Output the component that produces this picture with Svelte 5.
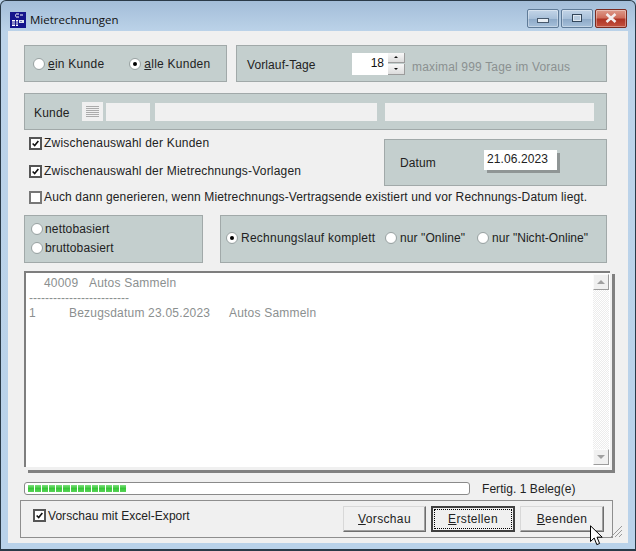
<script>
  const progressBlocks = Array.from({ length: 14 });
</script>

<div class="window">
  <header class="titlebar">
    <svg class="appicon" viewBox="0 0 16 16" aria-hidden="true">
      <rect width="16" height="16" fill="#14148c" />
      <path d="M6 2h3M5 3h1M5 4h1M6 5h3M10 3h3" stroke="#fff" stroke-width="1" fill="none" />
      <rect x="2" y="8" width="3" height="6" fill="#fff" />
      <rect x="6" y="8" width="2" height="6" fill="#fff" />
      <rect x="9" y="8" width="5" height="3" fill="#dfe4ee" />
      <path d="M2 10h3M2 12h3M6 10h2M6 12h2M11 9v1" stroke="#14148c" stroke-width="1" />
    </svg>
    <span class="title">Mietrechnungen</span>
    <div class="winbtns">
      <div class="winbtn min"><span></span></div>
      <div class="winbtn max"><span></span></div>
      <div class="winbtn close">
        <svg viewBox="0 0 14 10" width="14" height="10" aria-hidden="true"><path d="M2.5 1 L11.5 9 M11.5 1 L2.5 9" stroke="#f4eeee" stroke-width="2.6" /></svg>
      </div>
    </div>
  </header>

  <main class="client">
    <div class="row first">
      <section class="panel scope">
        <label class="opt"><i class="radio"></i><span><u>e</u>in Kunde</span></label>
        <label class="opt"><i class="radio on"></i><span><u>a</u>lle Kunden</span></label>
      </section>
      <section class="panel lead">
        <span class="lead-label">Vorlauf-Tage</span>
        <div class="spin">
          <div class="spin-value">18</div>
          <div class="spin-btns">
            <div class="spin-btn"><b class="up"></b></div>
            <div class="spin-btn"><b class="down"></b></div>
          </div>
        </div>
        <span class="muted">maximal 999 Tage im Voraus</span>
      </section>
    </div>

    <section class="panel customer">
      <span class="customer-label">Kunde</span>
      <div class="listbtn">
        <svg viewBox="0 0 13 11" width="13" height="11" aria-hidden="true"><path d="M0 .5h13M0 2.5h13M0 4.5h13M0 6.5h13M0 8.5h13M0 10.5h13" stroke="#ababab" stroke-width="1" /></svg>
      </div>
      <div class="field f1"></div>
      <div class="field f2"></div>
      <div class="field f3"></div>
    </section>

    <div class="middle">
      <div class="checks">
        <label class="check"><i class="box"><svg viewBox="0 0 11 11" aria-hidden="true"><path d="M2 5.5 L4.5 8 L9 2.5" fill="none" stroke="#111" stroke-width="2" /></svg></i><span>Zwischenauswahl der Kunden</span></label>
        <label class="check"><i class="box"><svg viewBox="0 0 11 11" aria-hidden="true"><path d="M2 5.5 L4.5 8 L9 2.5" fill="none" stroke="#111" stroke-width="2" /></svg></i><span>Zwischenauswahl der Mietrechnungs-Vorlagen</span></label>
      </div>
      <section class="panel date">
        <span>Datum</span>
        <div class="date-value">21.06.2023</div>
      </section>
    </div>

    <label class="check long"><i class="box off"></i><span>Auch dann generieren, wenn Mietrechnungs-Vertragsende existiert und vor Rechnungs-Datum liegt.</span></label>

    <div class="row options">
      <section class="panel basis">
        <label class="opt"><i class="radio"></i><span>nettobasiert</span></label>
        <label class="opt"><i class="radio"></i><span>bruttobasiert</span></label>
      </section>
      <section class="panel run">
        <label class="opt o1"><i class="radio on"></i><span>Rechnungslauf komplett</span></label>
        <label class="opt o2"><i class="radio"></i><span>nur "Online"</span></label>
        <label class="opt o3"><i class="radio"></i><span>nur "Nicht-Online"</span></label>
      </section>
    </div>

    <section class="log">
      <div class="log-inner">
        <div class="log-text">
          <div class="l1">40009&nbsp;&nbsp;&nbsp;Autos Sammeln</div>
          <div class="l2">-------------------------</div>
          <div class="l3"><span class="c1">1</span><span class="c2">Bezugsdatum 23.05.2023</span><span>Autos Sammeln</span></div>
        </div>
        <div class="scrollbar">
          <div class="sb-btn"><b class="sb-up"></b></div>
          <div class="sb-track"></div>
          <div class="sb-btn"><b class="sb-down"></b></div>
        </div>
      </div>
    </section>

    <div class="status">
      <div class="progress">
        {#each progressBlocks as _}<i></i>{/each}
      </div>
      <span>Fertig. 1 Beleg(e)</span>
    </div>

    <footer class="actions">
      <label class="check export"><i class="box"><svg viewBox="0 0 11 11" aria-hidden="true"><path d="M2 5.5 L4.5 8 L9 2.5" fill="none" stroke="#111" stroke-width="2" /></svg></i><span>Vorschau mit Excel-Export</span></label>
      <div class="buttons">
        <button type="button"><u>V</u>orschau</button>
        <button type="button" class="default"><span><u>E</u>rstellen</span></button>
        <button type="button"><u>B</u>eenden</button>
      </div>
    </footer>
  </main>

  <svg class="grip" viewBox="0 0 13 13" aria-hidden="true"><path d="M1 12 L12 1 M5 12 L12 5 M9 12 L12 9" stroke="#9a9a9a" stroke-width="1" fill="none" /></svg>
  <svg class="cursor" viewBox="0 0 14 21" aria-hidden="true"><path d="M.5.8 V16.5 L4.2 13 L6.8 19.6 L9.6 18.5 L7 12.2 H12.2 Z" fill="#fff" stroke="#000" stroke-width="1" /></svg>
</div>

<style>
  :global(body) { margin: 0; background: #b9d1e8; }
  .window {
    position: relative;
    width: 636px;
    height: 551px;
    box-sizing: border-box;
    overflow: hidden;
    padding: 0 7px 6px;
    display: flex;
    flex-direction: column;
    background: linear-gradient(180deg, #a3bdd8 0, #bcd3e9 31px, #b9d2ea 100%);
    border: 1px solid #2a3a48;
    border-width: 1px 1px 2px 1px;
    border-radius: 6px 6px 0 0;
    font-family: "Liberation Sans", Arial, sans-serif;
    font-size: 12px;
    color: #222;
  }
  .titlebar {
    flex: 0 0 30px;
    display: flex;
    align-items: center;
    padding-top: 7px;
    box-sizing: border-box;
  }
  .appicon { width: 16px; height: 16px; margin: 0 4px 0 2px; }
  .title { font-family: "Open Sans", sans-serif; font-size: 11.5px; color: #111; }
  .winbtns { margin-left: auto; display: flex; gap: 2px; margin-right: 1px; margin-top: -3px; }
  .winbtn {
    width: 30px;
    height: 17px;
    border: 1px solid #5f7b98;
    border-radius: 2px;
    display: flex;
    align-items: center;
    justify-content: center;
    background: linear-gradient(180deg, #c3d5e8 0, #a8c0d9 50%, #8eaac8 55%, #a6c0da 100%);
    box-shadow: inset 0 0 0 1px rgba(255,255,255,.35);
  }
  .winbtn.min span { width: 10px; height: 3px; margin-top: 4px; background: #e8eef4; border: 1px solid #46586c; }
  .winbtn.max span { width: 8px; height: 6px; border: 1px solid #33475c; box-shadow: inset 0 0 0 1px #dfe8f1; background: #b8cce0; }
  .winbtn.close {
    border-color: #7b2a1f;
    background: linear-gradient(180deg, #dd9a8a 0, #cf6e5c 45%, #ae3424 55%, #c4523f 100%);
  }
  .client {
    flex: 1;
    background: #f0f0f0;
    padding: 14px 21px 0 16px;
    display: flex;
    flex-direction: column;
  }
  .row { display: flex; }
  .panel {
    box-sizing: border-box;
    background: #c4cfce;
    border: 1px solid #a1a9a9;
    display: flex;
  }
  .first { gap: 9px; height: 37px; }
  .scope { width: 203px; align-items: center; padding-left: 8px; gap: 25px; padding-top: 1px; }
  .opt { display: inline-flex; align-items: center; gap: 3px; letter-spacing: .25px; }
  .radio {
    box-sizing: border-box;
    width: 12px;
    height: 12px;
    border-radius: 50%;
    border: 1px solid #9aa3a3;
    background: radial-gradient(circle at 45% 45%, #fff 55%, #e4e8e8 100%);
    display: inline-block;
    position: relative;
    flex: none;
  }
  .radio.on::after {
    content: "";
    position: absolute;
    left: 3px;
    top: 3px;
    width: 4px;
    height: 4px;
    border-radius: 50%;
    background: #000;
  }
  .lead { flex: 1; align-items: center; padding-left: 10px; }
  .lead-label { width: 105px; letter-spacing: .1px; margin-top: 2px; }
  .spin { display: flex; height: 22px; }
  .spin-value {
    width: 32px;
    background: #fff;
    text-align: right;
    padding-right: 4px;
    font-size: 12px;
    line-height: 21px;
    color: #111;
  }
  .spin-btns { display: flex; flex-direction: column; gap: 1px; width: 17px; }
  .spin-btn {
    flex: 1;
    background: linear-gradient(180deg, #f8f8f8, #dcdcdc);
    border: 1px solid #9c9c9c;
    border-width: 0 1px 1px 0;
    display: flex;
    align-items: center;
    justify-content: center;
  }
  .spin-btn b { width: 0; height: 0; border-left: 2px solid transparent; border-right: 2px solid transparent; }
  .spin-btn .up { border-bottom: 2px solid #111; }
  .spin-btn .down { border-top: 2px solid #111; }
  .muted { color: #8b9191; margin-left: 7px; margin-top: 6px; letter-spacing: .17px; }
  .customer {
    height: 37px;
    margin-top: 11px;
    align-items: center;
    padding-left: 9px;
  }
  .customer-label { width: 48px; font-size: 12px; letter-spacing: .2px; margin-top: 2px; }
  .listbtn {
    width: 21px;
    height: 19px;
    background: #f0f0f0;
    display: flex;
    align-items: center;
    justify-content: center;
  }
  .field { height: 18px; background: #f0f0f0; }
  .f1 { width: 44px; margin-left: 3px; }
  .f2 { width: 222px; margin-left: 5px; }
  .f3 { width: 209px; margin-left: 8px; }
  .middle { display: flex; justify-content: space-between; margin-top: 9px; height: 47px; }
  .checks { display: flex; flex-direction: column; gap: 14px; padding-left: 5px; margin-top: -3px; }
  .check { display: flex; align-items: center; gap: 2px; letter-spacing: .2px; height: 14px; }
  .box {
    box-sizing: border-box;
    width: 13px;
    height: 13px;
    border: 2px solid #555;
    background: #fff;
    display: block;
    flex: none;
  }
  .box.off { border: 2px solid #777; }
  .box svg { display: block; width: 9px; height: 9px; }
  .date {
    width: 223px;
    align-items: center;
    padding-left: 15px;
    letter-spacing: .1px;
  }
  .date > span { width: 84px; }
  .date-value {
    width: 73px;
    height: 20px;
    box-sizing: border-box;
    background: #fff;
    padding-left: 3px;
    line-height: 18px;
    box-shadow: 3px 3px 0 #8f9595;
    margin-top: -5px;
    letter-spacing: .1px;
  }
  .long { margin: 4px 0 0 5px; letter-spacing: .13px; }
  .options { margin-top: 11px; height: 48px; gap: 17px; }
  .basis { width: 179px; flex-direction: column; padding: 0 0 1px 6px; justify-content: center; gap: 5px; align-items: flex-start; }
  .basis .opt { height: 14px; gap: 2px; letter-spacing: .15px; }
  .run { flex: 1; align-items: center; padding-left: 5px; padding-bottom: 3px; }
  .run .opt { gap: 3px; }
  .o1 { width: 159px; letter-spacing: .26px; }
  .o2 { width: 92px; letter-spacing: .1px; }
  .o3 { letter-spacing: .05px; }
  .log {
    box-sizing: border-box;
    height: 202px;
    width: 591px;
    margin-top: 8px;
    padding: 0 5px 6px 0;
    display: flex;
    position: relative;
  }
  .log::after {
    content: "";
    position: absolute;
    left: 4px;
    right: 0;
    bottom: 0;
    height: 3px;
    background: #808080;
  }
  .log::before {
    content: "";
    position: absolute;
    right: 0;
    top: 3px;
    bottom: 0;
    width: 3px;
    background: #808080;
  }
  .log-inner {
    flex: 1;
    display: flex;
    background: #fff;
    border-top: 2px solid #7e7e7e;
    border-left: 2px solid #7e7e7e;
    padding-right: 1px;
  }
  .log-text { flex: 1; padding: 3px 0 0 3px; color: #8b8f8f; line-height: 15px; letter-spacing: .2px; }
  .l1 { padding-left: 15px; }
  .l2 { letter-spacing: 0; }
  .l3 { display: flex; }
  .c1 { width: 40px; }
  .c2 { width: 160px; }
  .scrollbar {
    width: 16px;
    margin: 1px 0 2px;
    display: flex;
    flex-direction: column;
  }
  .sb-btn {
    height: 16px;
    box-sizing: border-box;
    background: #f0f0f0;
    border: 1px solid;
    border-color: #fbfbfb #9c9c9c #9c9c9c #fbfbfb;
    display: flex;
    align-items: center;
    justify-content: center;
  }
  .sb-btn b { width: 0; height: 0; border-left: 4px solid transparent; border-right: 4px solid transparent; }
  .sb-up { border-bottom: 4px solid #a0a0a0; }
  .sb-down { border-top: 4px solid #a0a0a0; }
  .sb-track { flex: 1; background: conic-gradient(#fff 25%, #ececec 0 50%, #fff 0 75%, #ececec 0) 0 0 / 2px 2px; }
  .status {
    margin-top: 9px;
    height: 13px;
    display: flex;
    align-items: center;
    gap: 12px;
    letter-spacing: .05px;
  }
  .progress {
    box-sizing: border-box;
    width: 446px;
    height: 13px;
    border: 1px solid #8a8a8a;
    border-radius: 3px;
    background: #fff;
    padding: 2px 3px;
    display: flex;
    gap: 1px;
    flex: none;
  }
  .progress i { width: 6.1px; background: linear-gradient(180deg, #7fe07f, #37c637 50%, #58d458); }
  .actions {
    box-sizing: border-box;
    width: 593px;
    height: 38px;
    margin: 5px 0 0 -4px;
    border: 1px solid #8e8e8e;
    display: flex;
    align-items: center;
    justify-content: space-between;
    padding: 0 8px 0 12px;
  }
  .export { margin-top: -7px; letter-spacing: .04px; gap: 2px; }
  .buttons { display: flex; gap: 5px; margin-top: -1px; }
  button {
    box-sizing: border-box;
    width: 83px;
    height: 26px;
    padding: 0;
    font: inherit;
    letter-spacing: .35px;
    color: #222;
    background: #f0f0f0;
    border: 1px solid;
    border-color: #d8d8d8 #6e6e6e #6e6e6e #d8d8d8;
    box-shadow: inset -1px -1px 0 #a0a0a0;
  }
  button + button { width: 84px; }
  .default { border: 2px solid #404040; box-shadow: none; padding: 1px; }
  .default span {
    display: block;
    height: 100%;
    line-height: 18px;
    box-sizing: border-box;
    border: 1px dotted #000;
  }
  .grip { position: absolute; left: 609px; top: 524px; width: 13px; height: 13px; }
  .cursor { position: absolute; left: 589px; top: 524px; width: 14px; height: 21px; }
</style>
